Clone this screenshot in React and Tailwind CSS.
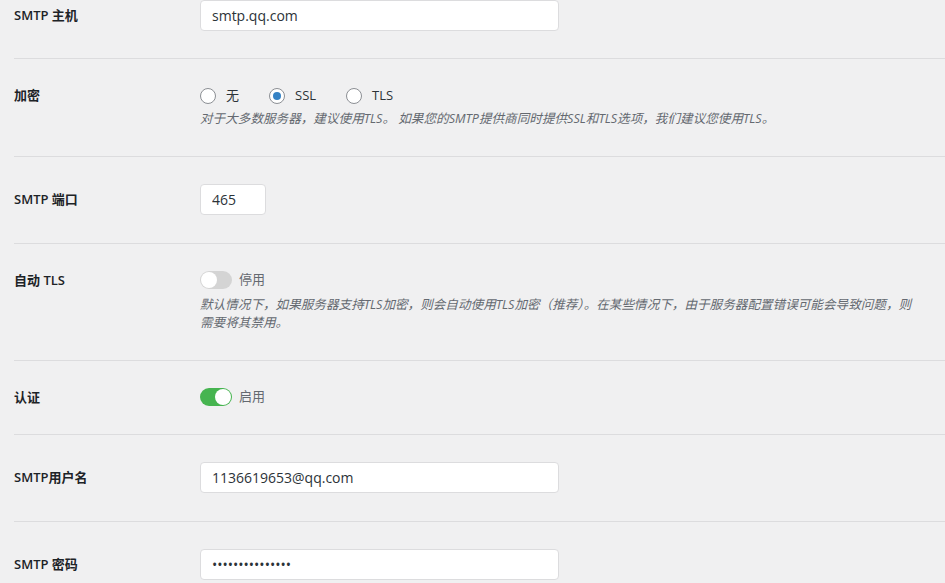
import React from 'react';

const font = { fontFamily: '"Open Sans", "Noto Sans CJK SC", sans-serif' };

const Row = ({ label, labelClass, first, last, children }) => (
  <div
    className={`flex ${first ? 'pt-0 pb-[27px]' : 'pt-[27px] pb-[28px]'} ${last ? '' : 'border-b border-[#dcdcde]'}`}
  >
    <div className={`w-[186px] shrink-0 text-[13px] font-semibold text-[#1d2327] ${labelClass}`}>
      {label}
    </div>
    <div className="flex-1">{children}</div>
  </div>
);

const TextInput = ({ value, type = 'text', width = 'w-[359px]' }) => (
  <input
    type={type}
    readOnly
    value={value}
    className={`${width} h-[31px] px-[11px] bg-white border border-[#dcdcde] rounded-[4px] text-[14px] text-[#2c3338] outline-none`}
    style={font}
  />
);

const Radio = ({ label, checked }) => (
  <label className="flex items-center gap-[10px]">
    <span className="w-[16px] h-[16px] rounded-full border border-[#8c8f94] bg-white flex items-center justify-center">
      {checked && <span className="w-[8px] h-[8px] rounded-full bg-[#3582c4]" />}
    </span>
    <span className="text-[13px] text-[#2c3338]">{label}</span>
  </label>
);

const Toggle = ({ on, text }) => (
  <div className="flex items-center gap-[7px] h-[18px]">
    <span
      className={`w-[32px] h-[18px] rounded-full flex items-center px-[1px] ${on ? 'bg-[#46b450] justify-end' : 'bg-[#d4d4d4] justify-start'}`}
    >
      <span className="w-[16px] h-[16px] rounded-full bg-white" />
    </span>
    <span className="text-[13px] text-[#646970]">{text}</span>
  </div>
);

const Desc = ({ children, className = '' }) => (
  <p className={`text-[12.6px] italic leading-[18px] text-[#646970] ${className}`}>{children}</p>
);

export default function App() {
  return (
    <div className="min-h-screen bg-[#f0f0f1] overflow-hidden" style={font}>
      <div className="pl-[14px]">
        <Row label="SMTP 主机" labelClass="leading-[31px]" first>
          <TextInput value="smtp.qq.com" />
        </Row>

        <Row label="加密" labelClass="leading-[18px]">
          <div className="flex items-center gap-[30px] h-[20px]">
            <Radio label="无" />
            <Radio label="SSL" checked />
            <Radio label="TLS" />
          </div>
          <Desc className="mt-[4px]">
            对于大多数服务器，建议使用TLS。 如果您的SMTP提供商同时提供SSL和TLS选项，我们建议您使用TLS。
          </Desc>
        </Row>

        <Row label="SMTP 端口" labelClass="leading-[31px]">
          <TextInput value="465" width="w-[66px]" />
        </Row>

        <Row label="自动 TLS" labelClass="leading-[18px]">
          <Toggle text="停用" />
          <Desc className="mt-[7px] w-[723px]">
            默认情况下，如果服务器支持TLS加密，则会自动使用TLS加密（推荐）。在某些情况下，由于服务器配置错误可能会导致问题，则需要将其禁用。
          </Desc>
        </Row>

        <Row label="认证" labelClass="leading-[18px]">
          <Toggle on text="启用" />
        </Row>

        <Row label="SMTP用户名" labelClass="leading-[31px]">
          <TextInput value="1136619653@qq.com" />
        </Row>

        <Row label="SMTP 密码" labelClass="leading-[31px]" last>
          <TextInput type="password" value="abcdefghijklmno" />
        </Row>
      </div>
    </div>
  );
}
